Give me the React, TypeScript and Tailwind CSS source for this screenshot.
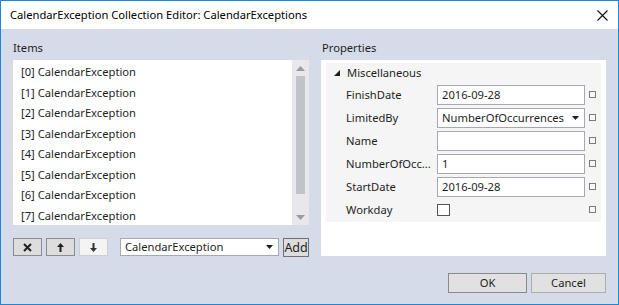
import React from "react";

const items = Array.from({ length: 8 }, (_, i) => `[${i}] CalendarException`);

type Prop = { label: string; kind: "text" | "select" | "check"; value?: string };

const props: Prop[] = [
  { label: "FinishDate", kind: "text", value: "2016-09-28" },
  { label: "LimitedBy", kind: "select", value: "NumberOfOccurrences" },
  { label: "Name", kind: "text", value: "" },
  { label: "NumberOfOcc...", kind: "text", value: "1" },
  { label: "StartDate", kind: "text", value: "2016-09-28" },
  { label: "Workday", kind: "check" },
];

const DropArrow = () => (
  <svg width="7" height="4" viewBox="0 0 7 4" className="shrink-0">
    <path d="M0 0h7L3.5 4z" fill="#1e1e1e" />
  </svg>
);

const SmallButton = ({ children, disabled }: { children: React.ReactNode; disabled?: boolean }) => (
  <div
    className={
      disabled
        ? "w-[29px] h-[18px] flex items-center justify-center bg-[#f4f4f4] border border-[#cfcfcf]"
        : "w-[29px] h-[18px] flex items-center justify-center bg-[#dddddd] border border-[#8c8c8c]"
    }
  >
    {children}
  </div>
);

const PropertyRow = ({ p }: { p: Prop }) => (
  <div className="flex items-center h-[23px]">
    <div className="w-[111px] pl-[20px] text-[#1e1e1e]">{p.label}</div>
    <div className="w-[148px] flex items-center">
      {p.kind === "check" ? (
        <div className="w-[13px] h-[12px] bg-white border border-[#555555]" />
      ) : (
        <div className="w-[148px] h-[20px] bg-white border border-[#a5a8b0] flex items-center justify-between pl-[4px] pr-[5px]">
          <span>{p.value}</span>
          {p.kind === "select" && <DropArrow />}
        </div>
      )}
    </div>
    <div className="ml-[4px] w-[7px] h-[7px] border border-[#7a7a7a] bg-[#f7f7f7]" />
  </div>
);

export default function App() {
  return (
    <div className="w-[619px] h-[305px] border border-[#1c86d8] flex flex-col bg-[#d6dbe9] font-['Noto_Sans',sans-serif] text-[11.2px] leading-[16px] text-[#1e1e1e] overflow-hidden">
      {/* title bar */}
      <div className="h-[28px] bg-white flex items-center justify-between pl-[9px] pr-[10px] shrink-0">
        <span className="text-black">CalendarException Collection Editor: CalendarExceptions</span>
        <svg width="11" height="11" viewBox="0 0 11 11">
          <path d="M0.5 0.5l10 10M10.5 0.5l-10 10" stroke="#111" strokeWidth="1.1" />
        </svg>
      </div>

      <div className="flex-1 flex flex-col px-[12px] pt-[11px] pb-[12px]">
        <div className="flex gap-[12px]">
          {/* items column */}
          <div className="w-[296px] flex flex-col">
            <div className="h-[16px] mb-[4px]">Items</div>
            <div className="h-[165px] bg-white flex">
              <div className="flex-1 pt-[2px] pl-[8px]">
                {items.map((t) => (
                  <div key={t} className="h-[20.5px] flex items-center">
                    {t}
                  </div>
                ))}
              </div>
              <div className="w-[17px] bg-[#e8e8ec] flex flex-col items-center">
                <svg width="9" height="5" viewBox="0 0 9 5" className="mt-[6px]">
                  <path d="M0 5L4.5 0L9 5z" fill="#9a9aa0" />
                </svg>
                <div className="mt-[5px] w-[9px] h-[118px] bg-[#c2c3c9]" />
                <div className="flex-1" />
                <svg width="9" height="5" viewBox="0 0 9 5" className="mb-[5px]">
                  <path d="M0 0h9L4.5 5z" fill="#9a9aa0" />
                </svg>
              </div>
            </div>
            <div className="mt-[13px] flex items-start">
              <div className="flex gap-[4px]">
                <SmallButton>
                  <svg width="9" height="9" viewBox="0 0 9 9">
                    <path d="M1 1l7 7M8 1l-7 7" stroke="#222" strokeWidth="2" />
                  </svg>
                </SmallButton>
                <SmallButton>
                  <svg width="7" height="9" viewBox="0 0 7 9">
                    <path d="M3.5 0L7 4H4.5V9h-2V4H0z" fill="#222" />
                  </svg>
                </SmallButton>
                <SmallButton disabled>
                  <svg width="7" height="9" viewBox="0 0 7 9">
                    <path d="M3.5 9L7 5H4.5V0h-2V5H0z" fill="#333" />
                  </svg>
                </SmallButton>
              </div>
              <div className="ml-[12px] w-[160px] h-[18px] bg-white border border-[#a5a8b0] flex items-center justify-between pl-[4px] pr-[5px]">
                <span>CalendarException</span>
                <DropArrow />
              </div>
              <div className="ml-[4px] w-[26px] h-[19px] bg-[#dddddd] border border-[#707070] flex items-center justify-center text-[12.5px]">
                Add
              </div>
            </div>
          </div>

          {/* properties column */}
          <div className="w-[287px] flex flex-col">
            <div className="h-[16px] mb-[4px] pl-[1px]">Properties</div>
            <div className="h-[196px] bg-white px-[5px] pt-[3px]">
              <div className="bg-[#f5f5f5] pb-[1px]">
                <div className="h-[20px] flex items-center pl-[8px]">
                  <svg width="6" height="6" viewBox="0 0 6 6">
                    <path d="M6 0V6H0z" fill="#1e1e1e" />
                  </svg>
                  <span className="ml-[7px]">Miscellaneous</span>
                </div>
                {props.map((p) => (
                  <PropertyRow key={p.label} p={p} />
                ))}
              </div>
            </div>
          </div>
        </div>

        <div className="mt-[16px] flex justify-end gap-[4px]">
          <div className="w-[79px] h-[20px] bg-[#e1e1e1] border border-[#8a8a8a] flex items-center justify-center">
            OK
          </div>
          <div className="w-[75px] h-[20px] bg-[#e1e1e1] border border-[#adadad] flex items-center justify-center">
            Cancel
          </div>
        </div>
      </div>
    </div>
  );
}
